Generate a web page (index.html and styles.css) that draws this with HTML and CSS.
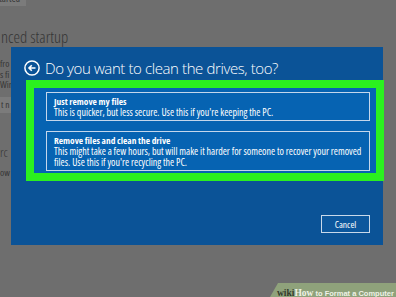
FILE: index.html
```html
<!DOCTYPE html>
<html lang="en">
<head>
    <meta charset="UTF-8">
    <title>Reset this PC</title>
    <link rel="stylesheet" href="styles.css">
</head>
<body>

    <!-- Settings page behind the dialog -->
    <div class="page">
        <div class="start-btn">Get started</div>
        <h2 class="section-title">nced startup</h2>
        <div class="side">
            <div class="section-text">
                <div class="line">fro</div>
                <div class="line">s fi</div>
                <div class="line">Win</div>
            </div>
            <div class="restart-btn">t n</div>
            <div class="more-title">rc</div>
            <div class="more-text">ow</div>
        </div>
    </div>

    <!-- Reset dialog -->
    <div class="dialog">
        <div class="dialog-head">
            <svg class="back-icon" width="16" height="16" viewBox="0 0 16 16">
                <circle cx="8" cy="8" r="7.1" fill="none" stroke="#fff" stroke-width="1.5"/>
                <path d="M11.5 8H5M7.8 5.2L5 8l2.8 2.8" fill="none" stroke="#fff" stroke-width="1.6"/>
            </svg>
            <h1 class="dialog-title">Do you want to clean the drives, too?</h1>
        </div>

        <div class="choices">
            <div class="choice">
                <div class="choice-title">Just remove my files</div>
                <div class="choice-text">This is quicker, but less secure. Use this if you're keeping the PC.</div>
            </div>
            <div class="choice">
                <div class="choice-title">Remove files and clean the drive</div>
                <div class="choice-text">This might take a few hours, but will make it harder for someone to recover your removed files. Use this if you're recycling the PC.</div>
            </div>
        </div>

        <div class="dialog-foot">
            <button class="btn-cancel">Cancel</button>
        </div>
    </div>

    <div class="watermark">
        <span class="wm-wiki">wiki</span><span class="wm-how">How</span><span class="wm-text"> to Format a Computer</span>
    </div>

</body>
</html>
```

FILE: styles.css
```css
/* General Styling */
body {
    margin: 0;
    background: #6e6e6e;
    font-family: 'Open Sans', 'Noto Sans', sans-serif;
    font-stretch: 87.5%;
    color: #353535;
    overflow: hidden;
    height: 297px;
    position: relative;
}

/* Page behind */
.page {
    display: flex;
    flex-direction: column;
    align-items: flex-start;
}

.start-btn {
    margin-top: -10px;
    margin-left: -24px;
    background: #7b7b7b;
    font-size: 10px;
    padding: 3px 6px;
    line-height: 10px;
}

.section-title {
    margin: 21px 0 0 1px;
    font-size: 16.5px;
    font-weight: 300;
    line-height: 20px;
}

.side {
    width: 11px;
    overflow: hidden;
}

.section-text {
    margin-top: 12px;
    font-size: 9.5px;
    line-height: 10.5px;
}

.line {
    white-space: nowrap;
}

.restart-btn {
    margin-top: 6px;
    background: #7b7b7b;
    font-size: 9.5px;
    line-height: 16px;
    padding-left: 1px;
    white-space: nowrap;
}

.more-title {
    margin-top: 32px;
    font-size: 13px;
    font-weight: 300;
    line-height: 14px;
}

.more-text {
    margin-top: 9px;
    font-size: 9.5px;
    line-height: 10px;
}

/* Dialog */
.dialog {
    position: absolute;
    left: 11px;
    top: 47px;
    width: 372px;
    height: 198px;
    background: #0b5397;
    color: white;
    display: flex;
    flex-direction: column;
}

.dialog-head {
    display: flex;
    align-items: center;
    gap: 5px;
    padding: 13px 0 4px 13px;
    height: 16px;
}

.back-icon {
    flex: none;
}

.dialog-title {
    margin: 0;
    font-size: 15px;
    font-weight: 300;
    font-stretch: 100%;
    letter-spacing: -0.4px;
    line-height: 16px;
}

/* Highlighted choices */
.choices {
    margin: 0 -1px 0 15px;
    border: 8px solid #2bf01f;
    background: #0663b2;
    padding: 4px 6px 2px 12px;
    display: flex;
    flex-direction: column;
    gap: 10px;
}

.choice {
    border: 1px solid #c4d7ec;
    padding: 3px 3px 2px 7px;
    line-height: 11px;
}

.choice-title {
    font-weight: 700;
    font-size: 9.4px;
}

.choice-text {
    font-size: 10px;
}

/* Footer */
.dialog-foot {
    margin-top: auto;
    display: flex;
    justify-content: flex-end;
    padding: 0 13px 12px 0;
}

.btn-cancel {
    width: 49px;
    height: 18px;
    border: 1px solid #c9d9ea;
    background: #0c579d;
    color: white;
    font-family: 'Open Sans', 'Noto Sans', sans-serif;
    font-stretch: 87.5%;
    font-size: 9.5px;
    padding: 0;
}

/* Watermark */
.watermark {
    position: absolute;
    right: 0;
    bottom: 0;
    width: 126px;
    height: 14px;
    background: #8fa27b;
    clip-path: polygon(8px 0, 100% 0, 100% 100%, 0 100%);
    box-sizing: border-box;
    padding-left: 7px;
    line-height: 15px;
    white-space: nowrap;
    font-stretch: 100%;
}

.wm-wiki {
    font-family: 'Liberation Serif', serif;
    font-weight: 700;
    font-size: 9.5px;
    color: #333b2a;
}

.wm-how {
    font-family: 'Liberation Serif', serif;
    font-weight: 700;
    font-size: 9.5px;
    color: #eef2e6;
}

.wm-text {
    font-family: 'Liberation Sans', sans-serif;
    font-weight: 700;
    font-size: 7.5px;
    color: #eef2e6;
}
```
